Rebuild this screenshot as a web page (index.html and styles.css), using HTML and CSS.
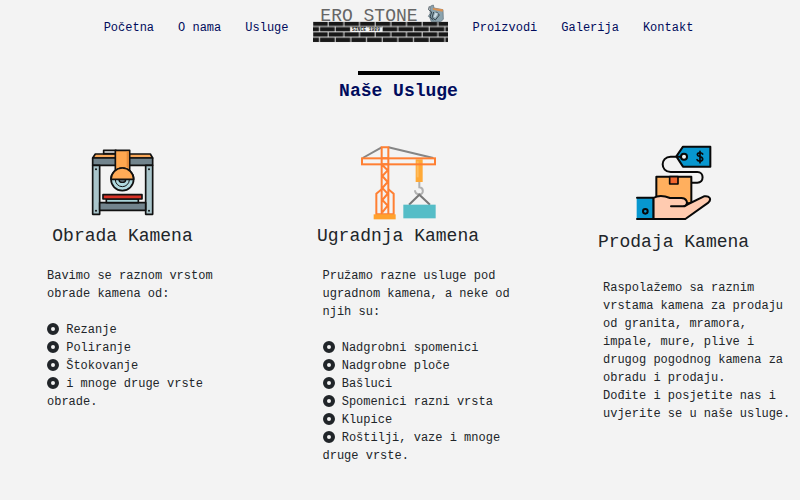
FILE: index.html
```html
<!DOCTYPE html>
<html lang="hr">
<head>
<meta charset="utf-8">
<meta name="viewport" content="width=device-width, initial-scale=1">
<title>Ero Stone</title>
<link rel="stylesheet" href="styles.css">
</head>
<body>
<header>
  <nav class="nav">
    <a href="#pocetna">Početna</a>
    <a href="#onama">O nama</a>
    <a href="#usluge">Usluge</a>
    <a class="logo" href="#pocetna" aria-label="Ero Stone">
      <svg viewBox="36 12 408 144">
        <defs>
          <pattern id="bricks" x="34" y="65" width="47" height="32" patternUnits="userSpaceOnUse">
            <rect width="47" height="32" fill="#e4e4e4"/>
            <rect x="2" y="0" width="44" height="13" fill="#181818"/>
            <rect x="0" y="16" width="20" height="13" fill="#181818"/>
            <rect x="23" y="16" width="24" height="13" fill="#181818"/>
          </pattern>
        </defs>
        <text class="logo-name" x="58" y="62">ERO STONE</text>
        <rect x="36" y="65" width="405" height="62" fill="url(#bricks)"/>
        <rect x="148" y="82" width="95" height="14" fill="#f3f3f3"/>
        <text class="logo-year" x="153" y="94">SINCE 1989</text>
        <path d="M389 18l8-3 2 9 27 5 1 29-8 7H391l-5-13-4-3 5-8z" fill="#8ba3ae" stroke="#5a6a74" stroke-width="2"/>
        <path d="M395 24l31 4-1 7-29-6z" fill="#d99254"/>
        <path d="M385 19l-2 10 9 7-5 15 9 10M398 36l-5 17 10 7 12-15-9-10" fill="none" stroke="#34434d" stroke-width="3"/>
        <path d="M402 39l9 1-8 13-5-3z" fill="#cbdbe4"/>
      </svg>
    </a>
    <a href="#proizvodi">Proizvodi</a>
    <a href="#galerija">Galerija</a>
    <a href="#kontakt">Kontakt</a>
  </nav>
</header>
<main id="usluge">
  <h2 class="title">Naše Usluge</h2>
  <div class="services">
    <section class="service">
      <svg class="icon" viewBox="15 15 228 228" stroke="#111" stroke-width="5" stroke-linejoin="round">
        <path d="M38 54L46 42H211L218 54Z" fill="#f9a85a"/>
        <path d="M71 41V31H108V41Z" fill="#eee"/>
        <rect x="38" y="54" width="180" height="22" fill="#72848d"/>
        <rect x="38" y="76" width="21" height="147" fill="#a9c5cb"/>
        <rect x="197" y="76" width="21" height="147" fill="#a9c5cb"/>
        <rect x="59" y="188" width="138" height="23" fill="#72848d"/>
        <rect x="79" y="177" width="96" height="11" fill="#a9d3d8"/>
        <rect x="69" y="164" width="117" height="13" fill="#d83226"/>
        <path d="M106 31H149V94H106Z" fill="#ffa74f"/>
        <path d="M143 34V82" stroke="#e68c3a" stroke-width="6"/>
        <circle cx="127" cy="118" r="34" fill="#b1dae0"/>
        <path d="M93 118a34 34 0 0 1 68 0Z" fill="#ffab58"/>
        <path d="M106 119a21 21 0 0 0 42 0" fill="none" stroke-width="3"/>
        <path d="M117 119a10 8 0 0 0 20 0Z" fill="#72848d" stroke-width="4"/>
        <g fill="#111" stroke="none"><circle cx="48" cy="88" r="3"/><circle cx="48" cy="212" r="3"/><circle cx="207" cy="88" r="3"/><circle cx="207" cy="212" r="3"/></g>
      </svg>
      <h3>Obrada Kamena</h3>
      <p>Bavimo se raznom vrstom obrade kamena od:<br><br>
        <i class="dot"></i> Rezanje<br>
        <i class="dot"></i> Poliranje<br>
        <i class="dot"></i> Štokovanje<br>
        <i class="dot"></i> i mnoge druge vrste obrade.</p>
    </section>
    <section class="service">
      <svg class="icon" viewBox="31 15 228 228" fill="none">
        <path d="M39 54L96 22M116 22L251 54" stroke="#858585" stroke-width="6"/>
        <rect x="198" y="58" width="21" height="68" fill="#ffa936"/>
        <path d="M204 64V112" stroke="#ffbc5d" stroke-width="6"/>
        <g stroke="#ff7f32" stroke-width="6">
          <rect x="37" y="55" width="219" height="18"/>
          <path d="M96 223V22H116V223M96 55h20M96 73h20M98 75l16 16-16 17 16 18-16 18 16 17-16 19 16 17-16 20"/>
          <path d="M96 148L80 161V223H132V161L116 148"/>
        </g>
        <rect x="72" y="223" width="66" height="15" fill="#ffa12d"/>
        <path d="M209 126V142C222 143 224 162 209 163C201 163 196 158 196 151" stroke="#b1b1b1" stroke-width="6"/>
        <path d="M178 194L209 164L241 194" stroke="#777" stroke-width="6"/>
        <rect x="161" y="194" width="97" height="41" fill="#55bdc7"/>
      </svg>
      <h3>Ugradnja Kamena</h3>
      <p>Pružamo razne usluge pod ugradnom kamena, a neke od njih su:<br><br>
        <i class="dot"></i> Nadgrobni spomenici<br>
        <i class="dot"></i> Nadgrobne ploče<br>
        <i class="dot"></i> Bašluci<br>
        <i class="dot"></i> Spomenici razni vrsta<br>
        <i class="dot"></i> Klupice<br>
        <i class="dot"></i> Roštilji, vaze i mnoge druge vrste.</p>
    </section>
    <section class="service service-wide">
      <svg class="icon" viewBox="33 15 228 228" stroke="#080808" stroke-width="6" stroke-linejoin="round" stroke-linecap="round">
        <path d="M154 49L174 20H256V80H174Z" fill="#0797cf"/>
        <circle cx="177" cy="50" r="9" fill="#f3f3f3"/>
        <path d="M167 50H137C105 50 105 96 137 96H217C238 96 238 128 217 128H200" fill="none"/>
        <path d="M233 42C229 36 217 38 217 44C217 51 233 48 233 57C233 65 219 65 216 59M225 34V68" fill="none" stroke-width="5"/>
        <rect x="94" y="110" width="105" height="80" fill="#ffaf5e"/>
        <path d="M134 110H159V132H134Z" fill="#f1662e" stroke-width="5"/>
        <path d="M85 174C100 165 120 168 135 174H169C185 174 188 187 184 195L237 169C253 166 261 177 250 188L181 237H85Z" fill="#ffcbb0"/>
        <path d="M138 199H174C181 199 185 196 187 190" fill="none"/>
        <path d="M35 173H85V237H35Z" fill="#0797cf" stroke="none"/>
        <path d="M36 173H85V237H36" fill="none"/>
        <circle cx="61" cy="214" r="7" fill="#0797cf"/>
      </svg>
      <h3>Prodaja Kamena</h3>
      <p>Raspolažemo sa raznim vrstama kamena za prodaju od granita, mramora, impale, mure, plive i drugog pogodnog kamena za obradu i prodaju.<br>Dođite i posjetite nas i uvjerite se u naše usluge.</p>
    </section>
  </div>
</main>
</body>
</html>
```
FILE: styles.css
```css
* {
  box-sizing: border-box;
}

body {
  margin: 0;
  background: #f3f3f3;
  color: #212529;
  font: 12px/18px "Liberation Mono", monospace;
}

.nav {
  display: flex;
  justify-content: center;
  align-items: center;
  gap: 24px;
  padding: 4px 3px 4px 0;
}

.nav a {
  color: #000b5c;
  text-decoration: none;
  white-space: nowrap;
}

.logo svg {
  display: block;
  width: 136px;
  height: 48px;
}

.logo-name {
  font-size: 54px;
  fill: #666;
}

.logo-year {
  font-size: 14px;
  font-weight: bold;
  fill: #222;
}

.title {
  margin: 15px 0 43px;
  padding-right: 3px;
  color: #000b5c;
  font-size: 18px;
  line-height: 22px;
  text-align: center;
}

.title::before {
  content: "";
  display: block;
  width: 82px;
  height: 4px;
  margin: 0 auto 5px;
  background: #000;
}

.services {
  display: flex;
  justify-content: space-between;
  padding: 0 31px 24px 27px;
}

.service {
  width: 191px;
}

.icon {
  display: block;
  width: 76px;
  height: 76px;
  margin: 0 auto;
}

.service h3 {
  margin: 4px 0 20px;
  font-size: 18px;
  font-weight: normal;
  line-height: 22px;
  text-align: center;
}

.service p {
  margin: 0 -22px 0 20px;
}

.service-wide h3 {
  margin: 10px 0 26px;
}

.service-wide p {
  margin: 0 -28px 0 25px;
}

.dot {
  display: inline-block;
  width: 12px;
  height: 12px;
  border: 4px solid #212529;
  border-radius: 50%;
  vertical-align: -2px;
}
```
